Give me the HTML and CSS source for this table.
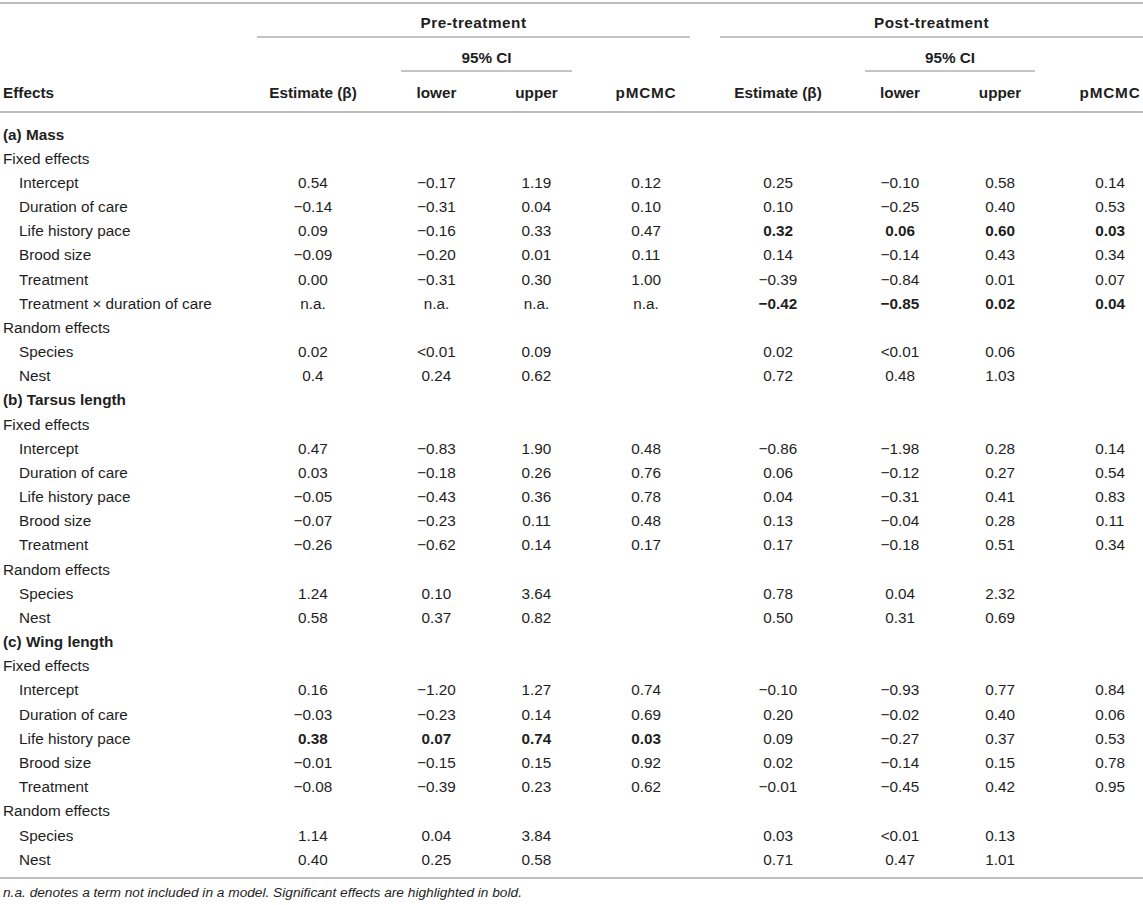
FILE: index.html
```html
<!DOCTYPE html>
<html lang="en">
<head>
<meta charset="utf-8">
<title>Table</title>
<link rel="stylesheet" href="styles.css">
</head>
<body>
<div class="wrap">
<table class="tbl">
  <colgroup>
    <col class="w-eff"><col class="w-est"><col class="w-low"><col class="w-up"><col class="w-p">
    <col class="w-est2"><col class="w-low2"><col class="w-up2"><col class="w-p2">
  </colgroup>
  <thead>
    <tr class="h1">
      <th></th>
      <th colspan="4"><div class="span-line pre">Pre-treatment</div></th>
      <th colspan="4"><div class="span-line post">Post-treatment</div></th>
    </tr>
    <tr class="h2">
      <th></th><th></th>
      <th colspan="2"><div class="span-line ci1">95% CI</div></th>
      <th></th><th></th>
      <th colspan="2"><div class="span-line ci2">95% CI</div></th>
      <th></th>
    </tr>
    <tr class="h3">
      <th class="eff">Effects</th>
      <th>Estimate (β)</th><th>lower</th><th>upper</th><th class="wide">pMCMC</th>
      <th>Estimate (β)</th><th>lower</th><th>upper</th><th class="last wide">pMCMC</th>
    </tr>
  </thead>
  <tbody>
    <tr class="first"><td class="sec" colspan="9">(a) Mass</td></tr>
    <tr><td class="lvl0">Fixed effects</td><td></td><td></td><td></td><td></td><td></td><td></td><td></td><td></td></tr>
    <tr><td class="lvl1">Intercept</td><td>0.54</td><td>−0.17</td><td>1.19</td><td>0.12</td><td>0.25</td><td>−0.10</td><td>0.58</td><td class="last">0.14</td></tr>
    <tr><td class="lvl1">Duration of care</td><td>−0.14</td><td>−0.31</td><td>0.04</td><td>0.10</td><td>0.10</td><td>−0.25</td><td>0.40</td><td class="last">0.53</td></tr>
    <tr><td class="lvl1">Life history pace</td><td>0.09</td><td>−0.16</td><td>0.33</td><td>0.47</td><td class="b">0.32</td><td class="b">0.06</td><td class="b">0.60</td><td class="last b">0.03</td></tr>
    <tr><td class="lvl1">Brood size</td><td>−0.09</td><td>−0.20</td><td>0.01</td><td>0.11</td><td>0.14</td><td>−0.14</td><td>0.43</td><td class="last">0.34</td></tr>
    <tr><td class="lvl1">Treatment</td><td>0.00</td><td>−0.31</td><td>0.30</td><td>1.00</td><td>−0.39</td><td>−0.84</td><td>0.01</td><td class="last">0.07</td></tr>
    <tr><td class="lvl1">Treatment × duration of care</td><td>n.a.</td><td>n.a.</td><td>n.a.</td><td>n.a.</td><td class="b">−0.42</td><td class="b">−0.85</td><td class="b">0.02</td><td class="last b">0.04</td></tr>
    <tr><td class="lvl0">Random effects</td><td></td><td></td><td></td><td></td><td></td><td></td><td></td><td></td></tr>
    <tr><td class="lvl1">Species</td><td>0.02</td><td>&lt;0.01</td><td>0.09</td><td></td><td>0.02</td><td>&lt;0.01</td><td>0.06</td><td class="last"></td></tr>
    <tr><td class="lvl1">Nest</td><td>0.4</td><td>0.24</td><td>0.62</td><td></td><td>0.72</td><td>0.48</td><td>1.03</td><td class="last"></td></tr>

    <tr><td class="sec" colspan="9">(b) Tarsus length</td></tr>
    <tr><td class="lvl0">Fixed effects</td><td></td><td></td><td></td><td></td><td></td><td></td><td></td><td></td></tr>
    <tr><td class="lvl1">Intercept</td><td>0.47</td><td>−0.83</td><td>1.90</td><td>0.48</td><td>−0.86</td><td>−1.98</td><td>0.28</td><td class="last">0.14</td></tr>
    <tr><td class="lvl1">Duration of care</td><td>0.03</td><td>−0.18</td><td>0.26</td><td>0.76</td><td>0.06</td><td>−0.12</td><td>0.27</td><td class="last">0.54</td></tr>
    <tr><td class="lvl1">Life history pace</td><td>−0.05</td><td>−0.43</td><td>0.36</td><td>0.78</td><td>0.04</td><td>−0.31</td><td>0.41</td><td class="last">0.83</td></tr>
    <tr><td class="lvl1">Brood size</td><td>−0.07</td><td>−0.23</td><td>0.11</td><td>0.48</td><td>0.13</td><td>−0.04</td><td>0.28</td><td class="last">0.11</td></tr>
    <tr><td class="lvl1">Treatment</td><td>−0.26</td><td>−0.62</td><td>0.14</td><td>0.17</td><td>0.17</td><td>−0.18</td><td>0.51</td><td class="last">0.34</td></tr>
    <tr><td class="lvl0">Random effects</td><td></td><td></td><td></td><td></td><td></td><td></td><td></td><td></td></tr>
    <tr><td class="lvl1">Species</td><td>1.24</td><td>0.10</td><td>3.64</td><td></td><td>0.78</td><td>0.04</td><td>2.32</td><td class="last"></td></tr>
    <tr><td class="lvl1">Nest</td><td>0.58</td><td>0.37</td><td>0.82</td><td></td><td>0.50</td><td>0.31</td><td>0.69</td><td class="last"></td></tr>

    <tr><td class="sec" colspan="9">(c) Wing length</td></tr>
    <tr><td class="lvl0">Fixed effects</td><td></td><td></td><td></td><td></td><td></td><td></td><td></td><td></td></tr>
    <tr><td class="lvl1">Intercept</td><td>0.16</td><td>−1.20</td><td>1.27</td><td>0.74</td><td>−0.10</td><td>−0.93</td><td>0.77</td><td class="last">0.84</td></tr>
    <tr><td class="lvl1">Duration of care</td><td>−0.03</td><td>−0.23</td><td>0.14</td><td>0.69</td><td>0.20</td><td>−0.02</td><td>0.40</td><td class="last">0.06</td></tr>
    <tr><td class="lvl1">Life history pace</td><td class="b">0.38</td><td class="b">0.07</td><td class="b">0.74</td><td class="b">0.03</td><td>0.09</td><td>−0.27</td><td>0.37</td><td class="last">0.53</td></tr>
    <tr><td class="lvl1">Brood size</td><td>−0.01</td><td>−0.15</td><td>0.15</td><td>0.92</td><td>0.02</td><td>−0.14</td><td>0.15</td><td class="last">0.78</td></tr>
    <tr><td class="lvl1">Treatment</td><td>−0.08</td><td>−0.39</td><td>0.23</td><td>0.62</td><td>−0.01</td><td>−0.45</td><td>0.42</td><td class="last">0.95</td></tr>
    <tr><td class="lvl0">Random effects</td><td></td><td></td><td></td><td></td><td></td><td></td><td></td><td></td></tr>
    <tr><td class="lvl1">Species</td><td>1.14</td><td>0.04</td><td>3.84</td><td></td><td>0.03</td><td>&lt;0.01</td><td>0.13</td><td class="last"></td></tr>
    <tr class="lastrow"><td class="lvl1">Nest</td><td>0.40</td><td>0.25</td><td>0.58</td><td></td><td>0.71</td><td>0.47</td><td>1.01</td><td class="last"></td></tr>
  </tbody>
</table>
<p class="note">n.a. denotes a term not included in a model. Significant effects are highlighted in bold.</p>
</div>
</body>
</html>
```

FILE: styles.css
```css
html, body {
  margin: 0;
  padding: 0;
  background: #ffffff;
}

body {
  font-family: "Liberation Sans", Arial, sans-serif;
  color: #1e1e1e;
  font-size: 15.3px;
}

.wrap {
  width: 1143px;
  padding-top: 2px;
}

.tbl {
  width: 1143px;
  table-layout: fixed;
  border-collapse: collapse;
  border-top: 2px solid #bdbdbd;
}

.w-eff { width: 253px; }
.w-est { width: 120px; }
.w-low { width: 127px; }
.w-up { width: 73px; }
.w-p { width: 146px; }
.w-est2 { width: 118px; }
.w-low2 { width: 126px; }
.w-up2 { width: 74px; }
.w-p2 { width: 106px; }

.tbl th,
.tbl td {
  padding: 0;
  text-align: center;
  white-space: nowrap;
  line-height: 24.17px;
}

.tbl th {
  font-weight: bold;
}

.h1 th {
  padding-top: 7px;
  vertical-align: bottom;
}

.h2 th {
  padding-top: 8px;
  vertical-align: bottom;
}

.span-line {
  border-bottom: 2px solid #c4c4c4;
}

.pre,
.post {
  padding-bottom: 1px;
  letter-spacing: 0.5px;
}

.ci1,
.ci2 {
  padding-bottom: 0;
}

.pre { margin: 0 29px 0 4px; }
.post { margin: 0 0 0 1px; }
.ci1 { margin: 0 1px 0 28px; }
.ci2 { margin: 0 2px 0 28px; }

.h3 th {
  padding-top: 9px;
  padding-bottom: 5px;
  border-bottom: 2px solid #bdbdbd;
}

.h3 th.wide {
  letter-spacing: 0.8px;
}

.h3 th.eff {
  text-align: left;
  padding-left: 3px;
}

.tbl th.last,
.tbl td.last {
  padding-left: 40px;
}

.first td {
  padding-top: 10px;
}

.lastrow td {
  padding-bottom: 5px;
}

.tbl tbody tr.lastrow {
  border-bottom: 2px solid #bdbdbd;
}

.sec {
  font-weight: bold;
  text-align: left !important;
  padding-left: 3px !important;
}

.lvl0 {
  text-align: left !important;
  padding-left: 3px !important;
}

.lvl1 {
  text-align: left !important;
  padding-left: 19px !important;
}

.b {
  font-weight: bold;
}

.note {
  margin: 0;
  padding: 4px 0 0 3px;
  font-size: 13.7px;
  font-style: italic;
  line-height: 20px;
}
```
